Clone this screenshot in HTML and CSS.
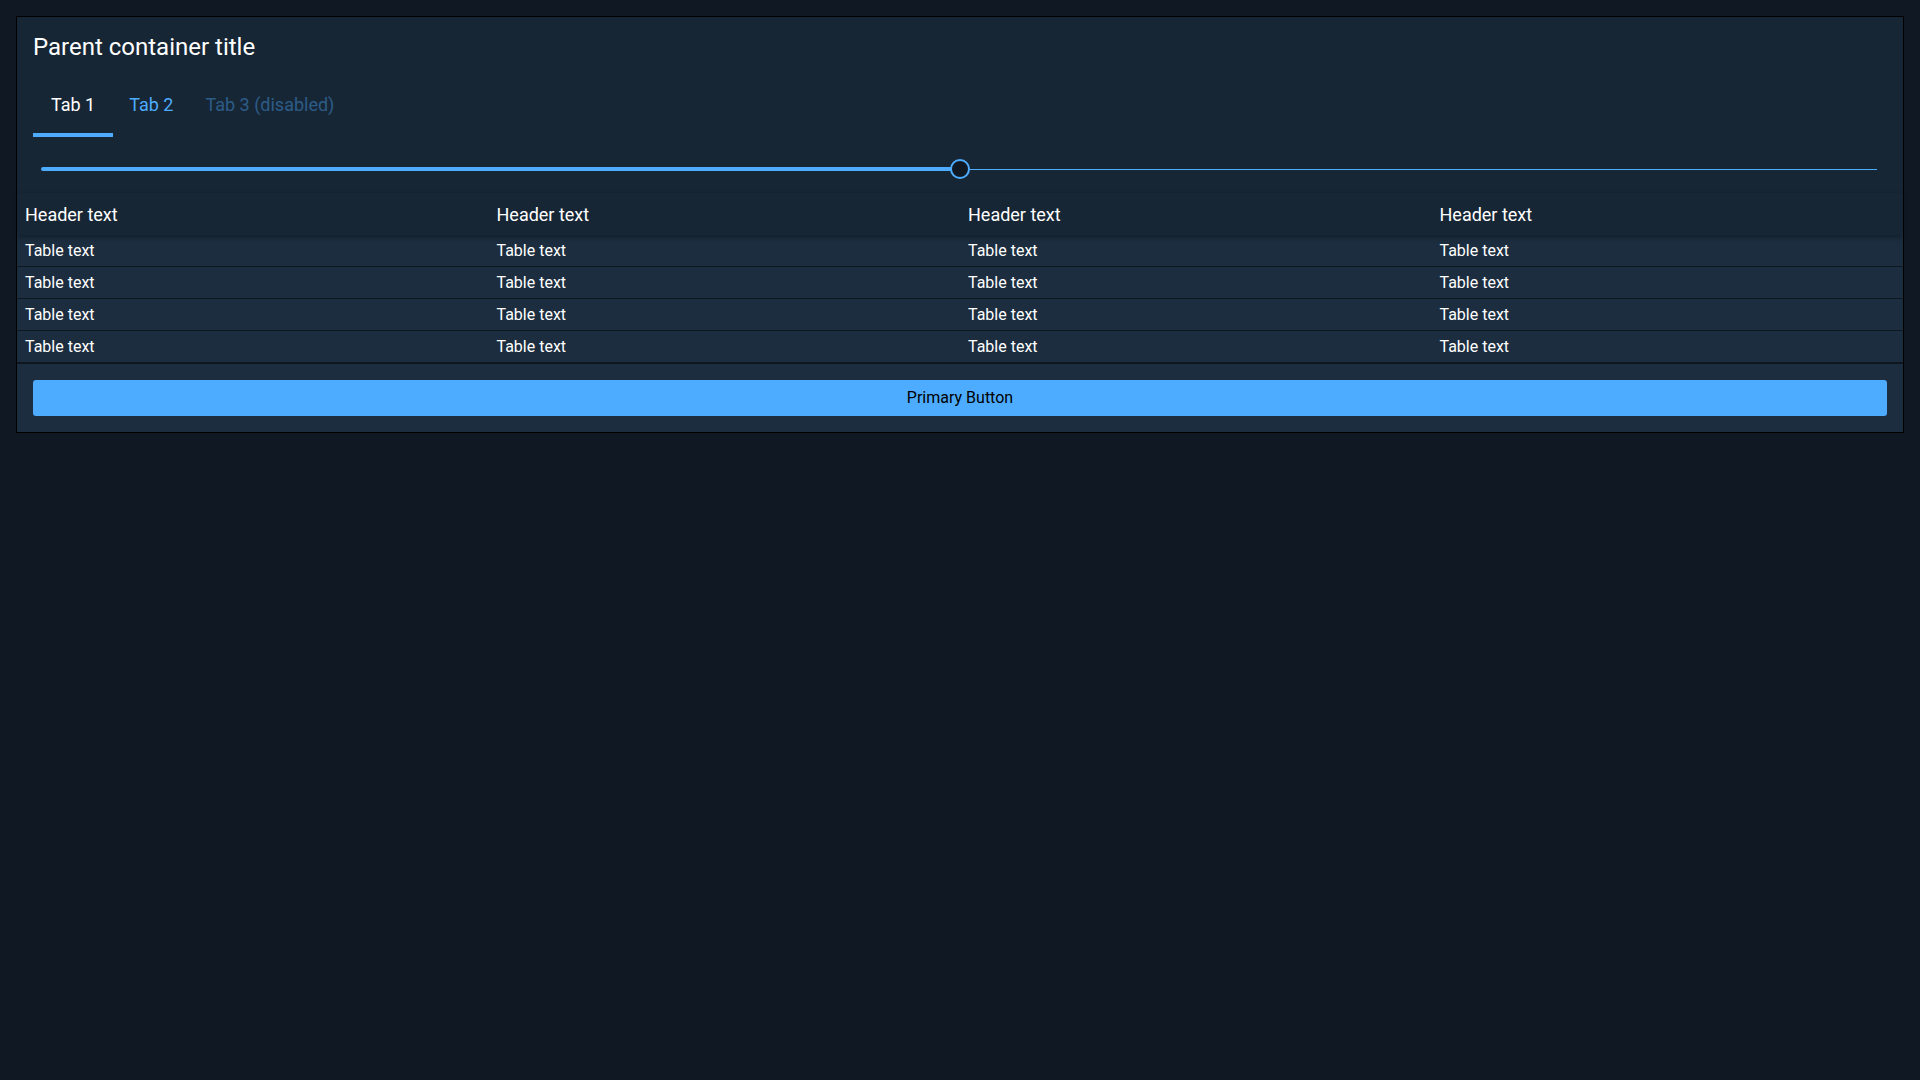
FILE: index.html
```html
<!DOCTYPE html>
<html lang="en">
<head>
<meta charset="utf-8">
<title>Parent container</title>
<link rel="stylesheet" href="styles.css">
</head>
<body>
<section class="container">
  <div class="container-header">
    <h1 class="title">Parent container title</h1>
    <nav class="tabs">
      <div class="tab tab-active">Tab 1</div>
      <div class="tab">Tab 2</div>
      <div class="tab tab-disabled">Tab 3 (disabled)</div>
    </nav>
    <div class="slider-area">
      <div class="slider">
        <div class="slider-fill" style="width: 50%"></div>
        <div class="slider-thumb"></div>
        <div class="slider-rest"></div>
      </div>
    </div>
  </div>
  <div class="table">
    <div class="thead">
      <div class="th">Header text</div>
      <div class="th">Header text</div>
      <div class="th">Header text</div>
      <div class="th">Header text</div>
    </div>
    <div class="tr">
      <div class="td">Table text</div><div class="td">Table text</div><div class="td">Table text</div><div class="td">Table text</div>
    </div>
    <div class="tr">
      <div class="td">Table text</div><div class="td">Table text</div><div class="td">Table text</div><div class="td">Table text</div>
    </div>
    <div class="tr">
      <div class="td">Table text</div><div class="td">Table text</div><div class="td">Table text</div><div class="td">Table text</div>
    </div>
    <div class="tr">
      <div class="td">Table text</div><div class="td">Table text</div><div class="td">Table text</div><div class="td">Table text</div>
    </div>
  </div>
  <div class="footer">
    <button class="btn-primary" type="button">Primary Button</button>
  </div>
</section>
</body>
</html>
```

FILE: styles.css
```css
* {
  box-sizing: border-box;
}

html, body {
  margin: 0;
  background: #101923;
}

body {
  padding: 16px;
  font-family: Roboto, "Noto Sans", "Liberation Sans", sans-serif;
  color: #ffffff;
}

.container {
  border: 1px solid #000000;
  background: #172635;
}

.container-header {
  padding: 16px 16px 0;
}

.title {
  margin: 0;
  font-size: 24px;
  font-weight: 400;
  line-height: 28px;
  color: #ffffff;
}

.tabs {
  display: flex;
  margin-top: 16px;
}

.tab {
  padding: 17px 16px 18px;
  font-size: 18px;
  line-height: 21px;
  color: #4dacff;
  border-bottom: 4px solid transparent;
}

.tab-active {
  padding-left: 18px;
  padding-right: 18px;
  color: #ffffff;
  border-bottom-color: #4dacff;
}

.tab-disabled {
  color: #4dacff;
  opacity: 0.4;
}

.slider-area {
  height: 56px;
  padding: 8px 10px 0 8px;
  display: flex;
  align-items: center;
}

.slider {
  flex: 1;
  height: 20px;
  display: flex;
  align-items: center;
}

.slider-fill {
  height: 4px;
  border-radius: 2px;
  background: #4dacff;
  flex-shrink: 0;
}

.slider-thumb {
  flex-shrink: 0;
  width: 20px;
  height: 20px;
  margin-left: -9px;
  border: 2px solid #4dacff;
  border-radius: 50%;
  background: #101923;
}

.slider-rest {
  flex: 1;
  height: 1px;
  background: #4dacff;
}

.table {
  border-bottom: 1px solid #0d141c;
}

.thead {
  position: relative;
  z-index: 1;
  display: grid;
  grid-template-columns: repeat(4, 1fr);
  background: #172635;
  box-shadow: 0 2px 5px rgba(0, 0, 0, 0.35);
}

.th {
  padding: 11px 8px 10px;
  font-size: 18px;
  line-height: 21px;
  color: #ffffff;
}

.tr {
  display: grid;
  grid-template-columns: repeat(4, 1fr);
  background: #1b2d3e;
  border-bottom: 1px solid #0f1720;
}

.td {
  padding: 6px 8px;
  font-size: 16px;
  line-height: 19px;
  color: #ffffff;
}

.footer {
  background: #1b2d3e;
  padding: 16px;
}

.btn-primary {
  display: block;
  width: 100%;
  height: 36px;
  border: none;
  border-radius: 3px;
  background: #4dacff;
  color: #000000;
  font-family: Roboto, "Noto Sans", "Liberation Sans", sans-serif;
  font-size: 16px;
  line-height: 19px;
  padding: 0 16px 1px;
}
```
